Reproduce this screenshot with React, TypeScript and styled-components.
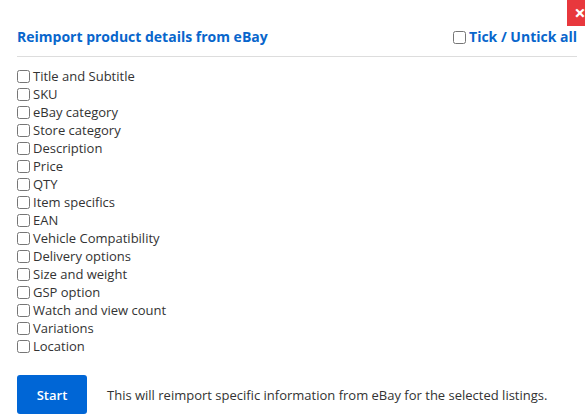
import styled, { createGlobalStyle } from 'styled-components';

const GlobalStyle = createGlobalStyle`
  html, body {
    margin: 0;
    padding: 0;
    background: #fff;
    overflow: hidden;
  }
  body {
    font-family: 'Open Sans', 'Liberation Sans', sans-serif;
    color: #333;
  }
`;

const Modal = styled.div`
  position: relative;
  width: 585px;
  height: 420px;
  box-sizing: border-box;
  padding: 27px 8px 0 17px;
`;

const Close = styled.button`
  position: absolute;
  top: 0;
  right: -8px;
  width: 26px;
  height: 26px;
  border: none;
  padding: 0;
  background: #e8383d;
  color: #fff;
  font-family: 'Open Sans', sans-serif;
  font-size: 20px;
  font-weight: 700;
  line-height: 24px;
  text-align: center;
`;

const Header = styled.div`
  display: flex;
  justify-content: space-between;
  align-items: center;
  padding-bottom: 9px;
  border-bottom: 1px solid #ddd;
`;

const Title = styled.h3`
  margin: 0;
  font-size: 14px;
  font-weight: 700;
  line-height: 20px;
  color: #0866cc;
`;

const TickAll = styled.label`
  display: flex;
  align-items: center;
  font-size: 14px;
  font-weight: 700;
  line-height: 20px;
  color: #0866cc;
`;

const List = styled.div`
  display: flex;
  flex-direction: column;
  margin-top: 10px;
`;

const Row = styled.label`
  display: flex;
  align-items: center;
  height: 18px;
  font-size: 13px;
  line-height: 18px;
`;

const Box = styled.input.attrs({ type: 'checkbox' })`
  width: 13px;
  height: 13px;
  margin: 0 3px 0 0;
`;

const Footer = styled.div`
  display: flex;
  align-items: center;
  gap: 20px;
  margin-top: 20px;
`;

const StartButton = styled.button`
  width: 70px;
  height: 39px;
  border: none;
  border-radius: 3px;
  background: #0066d6;
  color: #fff;
  font-family: 'Open Sans', sans-serif;
  font-size: 13px;
  font-weight: 600;
`;

const Note = styled.span`
  font-size: 13px;
  color: #333;
`;

const fields = [
  'Title and Subtitle',
  'SKU',
  'eBay category',
  'Store category',
  'Description',
  'Price',
  'QTY',
  'Item specifics',
  'EAN',
  'Vehicle Compatibility',
  'Delivery options',
  'Size and weight',
  'GSP option',
  'Watch and view count',
  'Variations',
  'Location',
];

export default function App() {
  return (
    <>
      <GlobalStyle />
      <Modal>
        <Close>×</Close>
        <Header>
          <Title>Reimport product details from eBay</Title>
          <TickAll>
            <Box />
            Tick / Untick all
          </TickAll>
        </Header>
        <List>
          {fields.map((f) => (
            <Row key={f}>
              <Box />
              {f}
            </Row>
          ))}
        </List>
        <Footer>
          <StartButton>Start</StartButton>
          <Note>This will reimport specific information from eBay for the selected listings.</Note>
        </Footer>
      </Modal>
    </>
  );
}
